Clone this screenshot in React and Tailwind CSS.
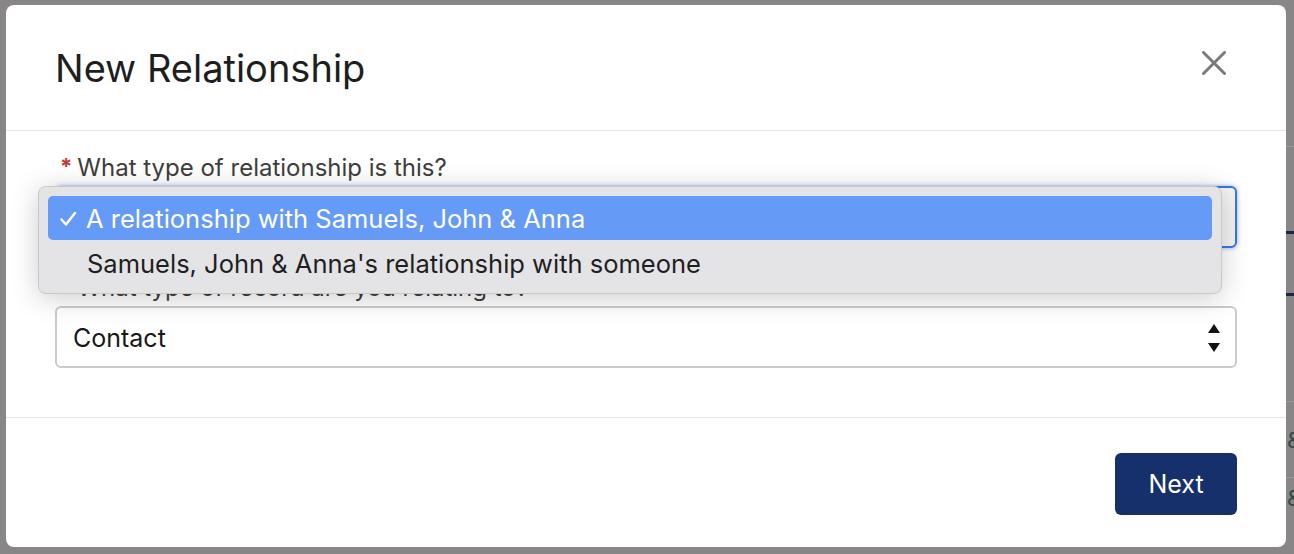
import React from "react";

export default function App() {
  return (
    <div
      className="relative w-[1294px] h-[554px] overflow-hidden bg-[#888687] pt-[5px] pl-[6px]"
      style={{ fontFamily: "Inter, 'Liberation Sans', sans-serif" }}
    >
      {/* background page bits peeking at right edge */}
      <div className="absolute right-0 top-[146px] w-[8px] h-px bg-[#9b999a]" />
      <div className="absolute right-0 top-[231px] w-[8px] h-[3px] bg-[#1c2745]" />
      <div className="absolute right-0 top-[293px] w-[8px] h-[3px] bg-[#1c2745]" />
      <div className="absolute right-0 top-[401px] w-[8px] h-px bg-[#9b999a]" />
      <div className="absolute right-0 top-[477px] w-[8px] h-px bg-[#9b999a]" />
      <div className="absolute left-[1287px] top-[426px] text-[22px] leading-[28px] text-[#2f4a48]">&amp;</div>
      <div className="absolute left-[1287px] top-[484px] text-[22px] leading-[28px] text-[#2f4a48]">&amp;</div>

      <div className="relative w-[1280px] h-[542px] rounded-[8px] bg-white flex flex-col">
        {/* header */}
        <div className="h-[126px] border-b border-[#e5e5e5] flex items-center justify-between pl-[49px] pr-[60px] shrink-0">
          <h1 className="text-[38px] leading-[44px] text-[#1e1e1e] font-normal">New Relationship</h1>
          <svg width="24" height="24" viewBox="0 0 24 24" className="mt-[-10px]">
            <path d="M1.5 1.5 L22.5 22.5 M22.5 1.5 L1.5 22.5" stroke="#7a7a7a" strokeWidth="3" strokeLinecap="round" />
          </svg>
        </div>

        {/* body */}
        <div className="relative pt-[24px] pb-[49px] px-[49px] border-b border-[#e5e5e5] shrink-0">
          <div className="flex items-center h-[24px] text-[24px] text-[#3e3e3c] pt-[2px]">
            <span className="text-[#c23934] text-[22px] font-bold mr-[5px] ml-[5px] mt-[-4px]">*</span>
            What type of relationship is this?
          </div>
          <div className="mt-[7px] h-[62px] rounded-[6px] border-2 border-[#3a78d8] bg-[#f4f4f4] shadow-[0_0_4px_rgba(27,96,220,0.5)]" />

          <div className="mt-[27px] flex items-center h-[24px] text-[24px] text-[#3e3e3c] pt-[2px]">
            <span className="text-[#c23934] text-[22px] font-bold mr-[5px] ml-[5px] mt-[-4px]">*</span>
            What type of record are you relating to?
          </div>
          <div className="mt-[7px] h-[62px] rounded-[6px] border-2 border-[#cbcbcb] bg-white flex items-center justify-between pl-[16px] pr-[14px]">
            <span className="text-[25px] text-[#181818] pt-[3px]">Contact</span>
            <svg width="14" height="32" viewBox="0 0 14 32" className="mt-[2px]">
              <path d="M7 2 L13 11 L1 11 Z" fill="#111" />
              <path d="M1 21 L13 21 L7 30 Z" fill="#111" />
            </svg>
          </div>

          {/* open dropdown menu */}
          <div className="absolute left-[32px] top-[55px] w-[1184px] h-[108px] rounded-[8px] bg-[#e4e4e6] border border-[#c8c8ca] shadow-[0_4px_28px_rgba(0,0,0,0.2)] p-[9px] pb-0 flex flex-col">
            <div className="h-[44px] rounded-[5px] bg-[#659bf7] flex items-center text-white text-[25.5px] pt-[2px]">
              <svg width="17" height="16" viewBox="0 0 17 16" className="ml-[12px] mr-[9px]">
                <path d="M1.5 8.5 L6 13.5 L15 2" stroke="#fff" strokeWidth="2.4" fill="none" strokeLinecap="round" strokeLinejoin="round" />
              </svg>
              A relationship with Samuels, John &amp; Anna
            </div>
            <div className="h-[46px] flex items-center pl-[39px] text-[25.5px] text-[#1f1f1f] pt-[2px]">
              Samuels, John &amp; Anna's relationship with someone
            </div>
          </div>
        </div>

        {/* footer */}
        <div className="flex justify-end pr-[49px] pt-[35px]">
          <button className="w-[122px] h-[62px] rounded-[6px] bg-[#16306b] text-white text-[25px] flex items-center justify-center pt-[2px]">
            Next
          </button>
        </div>
      </div>
    </div>
  );
}
